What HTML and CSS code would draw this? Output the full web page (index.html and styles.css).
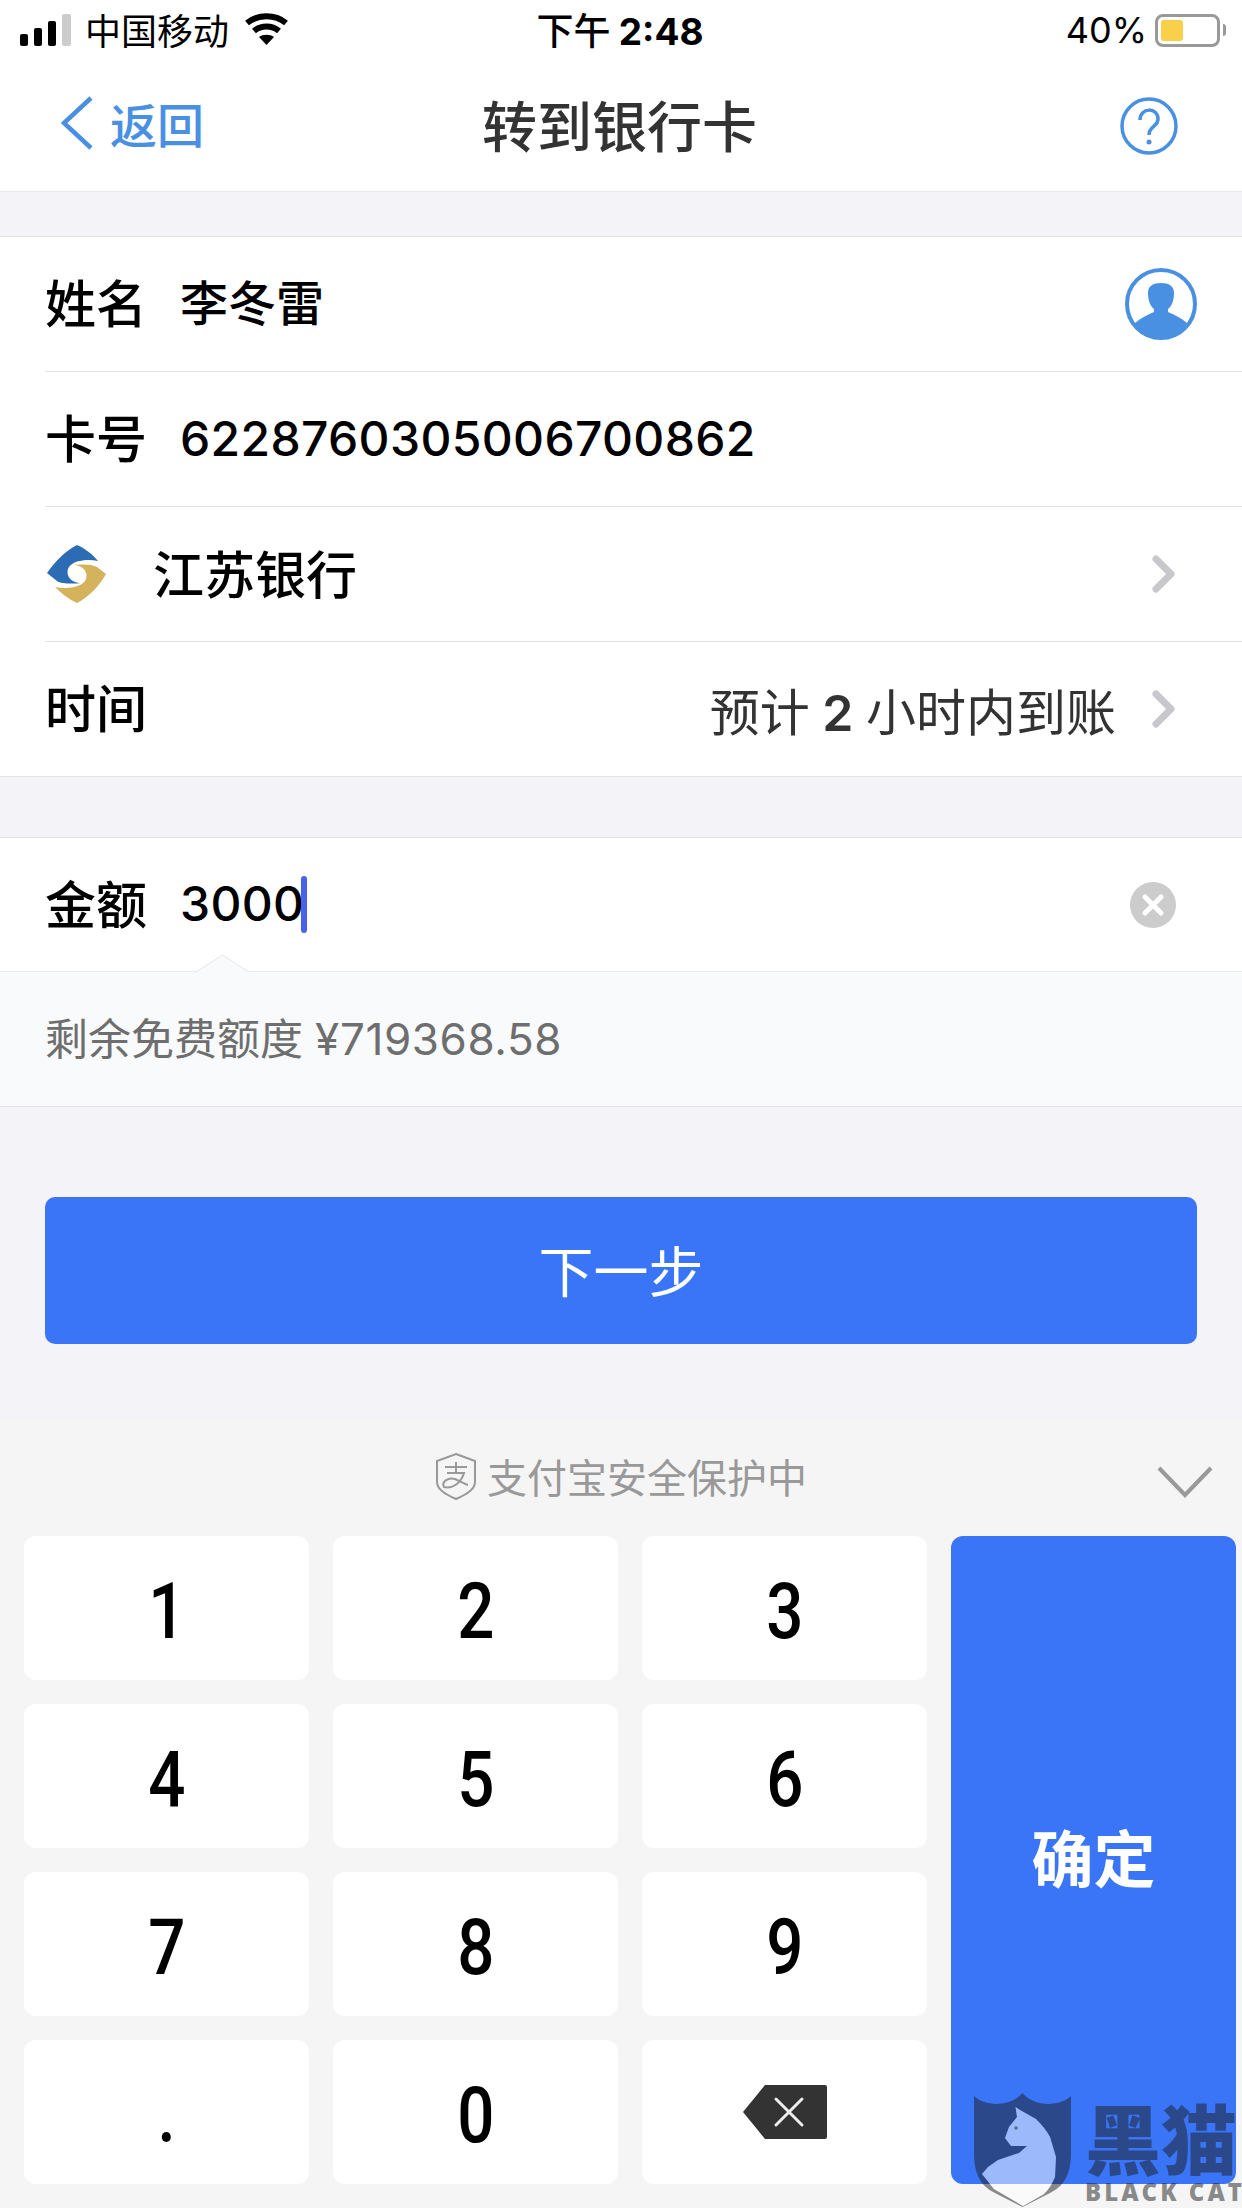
FILE: index.html
```html
<!DOCTYPE html>
<html lang="zh-CN">
<head>
  <meta charset="UTF-8">
  <meta name="viewport" content="width=device-width, initial-scale=1.0">
  <title>转到银行卡</title>
  <link rel="stylesheet" href="styles.css">
</head>
<body>
  <div class="status-bar">
    <div class="status-left">
      <svg class="signal" width="52" height="32" viewBox="0 0 52 32">
        <rect x="0" y="20" width="8" height="12" rx="2" fill="#000"/>
        <rect x="14" y="14" width="8" height="18" rx="2" fill="#000"/>
        <rect x="28" y="7" width="8" height="25" rx="2" fill="#000"/>
        <rect x="42" y="0" width="9" height="32" rx="2" fill="#ccc"/>
      </svg>
      <span class="carrier">中国移动</span>
      <svg class="wifi" width="45" height="32" viewBox="0 0 45 32">
        <path d="M3 10 C14 1 31 1 42 10" fill="none" stroke="#000" stroke-width="6"/>
        <path d="M10 18 C17 12 28 12 35 18" fill="none" stroke="#000" stroke-width="6"/>
        <path d="M15 24 C19 21 26 21 30 24 L22.5 32 Z" fill="#000"/>
      </svg>
    </div>
    <div class="status-time">下午 <b>2:48</b></div>
    <div class="status-right">
      <span class="battery-text">40%</span>
      <div class="battery"><div class="battery-fill"></div></div>
      <div class="battery-cap"></div>
    </div>
  </div>

  <div class="nav-bar">
    <div class="nav-back">
      <svg width="34" height="54" viewBox="0 0 34 54">
        <path d="M31 2 L4 27 L31 52" fill="none" stroke="#4a90e2" stroke-width="4.5"/>
      </svg>
      <span>返回</span>
    </div>
    <div class="nav-title">转到银行卡</div>
    <svg class="nav-help" width="58" height="58" viewBox="0 0 58 58">
      <circle cx="29" cy="29" r="27" fill="none" stroke="#4a90e2" stroke-width="3.5"/>
      <path d="M20 23 C20 10 38 10 38 22 C38 30 29 29 29 38" fill="none" stroke="#4a90e2" stroke-width="3.5"/>
      <circle cx="29" cy="45" r="2.5" fill="#4a90e2"/>
    </svg>
  </div>

  <div class="group first-group">
    <div class="row">
      <span class="label">姓名</span>
      <span class="value">李冬雷</span>
      <svg class="avatar" width="72" height="72" viewBox="0 0 72 72">
        <defs><clipPath id="avatarClip"><circle cx="36" cy="36" r="35"/></clipPath></defs>
        <circle cx="36" cy="36" r="34" fill="#fff" stroke="#4a90e2" stroke-width="4"/>
        <g clip-path="url(#avatarClip)">
          <path d="M23 25 C23 18 28 15 36 15 C44 15 49 18 49 25 C49 32 47 38 43 41 L43 44 C50 47 56 50 62 55 L62 72 L10 72 L10 55 C16 50 22 47 29 44 L29 41 C25 38 23 32 23 25 Z" fill="#4a90e2"/>
        </g>
      </svg>
    </div>
    <div class="row">
      <span class="label">卡号</span>
      <span class="value digits">6228760305006700862</span>
    </div>
    <div class="row">
      <svg class="bank-logo" width="60" height="58" viewBox="0 0 60 58">
        <path d="M30 0 C39 4 46 10 51 16 C41 14 27 15 22 22 C18 28 22 38 34 38 C27 39 14 39 10 36 L0 28 C7 18 18 6 30 0 Z" fill="#2b6cb4"/>
        <path d="M30 58 C21 54 14 48 8 42 C19 44 33 43 38 36 C42 30 38 20 26 20 C33 19 46 19 50 22 L59 29 C53 40 42 52 30 58 Z" fill="#d4b35c"/>
      </svg>
      <span class="bank-name">江苏银行</span>
      <svg class="chevron" width="24" height="38" viewBox="0 0 24 38">
        <path d="M4 4 L19 19 L4 34" fill="none" stroke="#c7c7cc" stroke-width="7" stroke-linecap="round" stroke-linejoin="round"/>
      </svg>
    </div>
    <div class="row last-row">
      <span class="label">时间</span>
      <span class="row-note">预计 <b>2</b> 小时内到账</span>
      <svg class="chevron" width="24" height="38" viewBox="0 0 24 38">
        <path d="M4 4 L19 19 L4 34" fill="none" stroke="#c7c7cc" stroke-width="7" stroke-linecap="round" stroke-linejoin="round"/>
      </svg>
    </div>
  </div>

  <div class="group amount-group">
    <div class="row amount-row">
      <span class="label">金额</span>
      <span class="value digits">3000</span>
      <span class="caret"></span>
      <svg class="clear" width="46" height="46" viewBox="0 0 46 46">
        <circle cx="23" cy="23" r="23" fill="#ccc"/>
        <path d="M15 15 L31 31 M31 15 L15 31" stroke="#fff" stroke-width="5" stroke-linecap="round"/>
      </svg>
    </div>
    <div class="hint">
      <svg class="hint-arrow" width="53" height="18" viewBox="0 0 53 18">
        <path d="M0 18 L26.5 1 L53 18" fill="#f9fafc" stroke="#e6e6ea" stroke-width="1"/>
      </svg>
      剩余免费额度 <span class="hint-num">¥719368.58</span>
    </div>
  </div>

  <div class="next-wrap">
    <div class="next-btn"><span>下一步</span></div>
  </div>

  <div class="keyboard">
    <div class="kb-head">
      <svg class="shield" width="42" height="48" viewBox="0 0 42 48">
        <path d="M21 2 L40 9 L40 30 C40 38 30 43 21 47 C12 43 2 38 2 30 L2 9 Z" fill="none" stroke="#999" stroke-width="2"/>
        <path d="M10 15 L32 15 M21 10 L21 21 M12 21 L29 21 C26 31 18 37 9 35 C6 30 13 25 20 27 C25 29 29 32 33 33" fill="none" stroke="#999" stroke-width="2"/>
      </svg>
      <span>支付宝安全保护中</span>
      <svg class="kb-hide" width="56" height="33" viewBox="0 0 56 33">
        <path d="M2 3 L28 30 L54 3" fill="none" stroke="#999" stroke-width="4"/>
      </svg>
    </div>
    <div class="keys">
      <div class="key"><span class="num">1</span></div>
      <div class="key"><span class="num">2</span></div>
      <div class="key"><span class="num">3</span></div>
      <div class="key confirm"><span>确定</span></div>
      <div class="key"><span class="num">4</span></div>
      <div class="key"><span class="num">5</span></div>
      <div class="key"><span class="num">6</span></div>
      <div class="key"><span class="num">7</span></div>
      <div class="key"><span class="num">8</span></div>
      <div class="key"><span class="num">9</span></div>
      <div class="key"><span class="num">.</span></div>
      <div class="key"><span class="num">0</span></div>
      <div class="key">
        <svg width="84" height="54" viewBox="0 0 84 54">
          <path d="M22 0 L82 0 Q84 0 84 2 L84 52 Q84 54 82 54 L22 54 L0 27 Z" fill="#333"/>
          <path d="M33 14 L59 40 M59 14 L33 40" stroke="#eee" stroke-width="3" stroke-linecap="round"/>
        </svg>
      </div>
    </div>
  </div>

  <div class="watermark">
    <svg width="97" height="114" viewBox="0 0 97 114">
      <path fill-rule="evenodd" d="M0 3 C10 13 36 15 48.5 0 C61 15 87 13 97 3 L97 60 C97 84 88 94 76 100 L48.5 114 L21 100 C9 94 0 84 0 60 Z M41.5 14 L46 17 L62 26 C68 32 73 38 76 44 L82 64 L81 84 C78 91 75 96 70 101 L49 113 L20 96 L8 81 L14 74 L24 67 L45 60 L53 53 L37 53 L31 45 L35 34 L43 24 Z" fill="#1e1e1e" fill-opacity="0.5"/>
      <path d="M41.5 14 L46 17 L62 26 C68 32 73 38 76 44 L82 64 L81 84 C78 91 75 96 70 101 L49 113 L20 96 L8 81 L14 74 L24 67 L45 60 L53 53 L37 53 L31 45 L35 34 L43 24 Z" fill="#fff" fill-opacity="0.5"/>
      <circle cx="42" cy="35" r="1.8" fill="#1e1e1e" fill-opacity="0.5"/>
    </svg>
    <div class="wm-text">
      <div class="wm-cn">黑猫</div>
      <div class="wm-en">BLACK CAT</div>
    </div>
  </div>
</body>
</html>
```

FILE: styles.css
```css
/* General Styles */
html, body {
  margin: 0;
  width: 1242px;
  height: 2208px;
  overflow: hidden;
}

body {
  position: relative;
  display: flex;
  flex-direction: column;
  font-family: "Noto Sans CJK SC", "Noto Sans", sans-serif;
  background: #f3f3f8;
  color: #000;
}

/* Status bar */
.status-bar {
  height: 60px;
  flex: none;
  background: #fff;
  display: grid;
  grid-template-columns: 1fr auto 1fr;
  align-items: center;
  padding: 0 16px 0 20px;
  font-size: 36px;
}

.status-left {
  display: flex;
  align-items: center;
}

.carrier {
  margin-left: 13px;
  margin-bottom: 3px;
}

.wifi {
  margin-left: 15px;
  margin-bottom: 2px;
}

.status-time {
  font-size: 37px;
  font-weight: 500;
  margin-right: 6px;
  margin-bottom: 3px;
}

.status-time b {
  font-family: "Inter", sans-serif;
  font-weight: 700;
}

.status-right {
  display: flex;
  align-items: center;
  justify-content: flex-end;
}

.battery-text {
  font-family: "Inter", sans-serif;
  font-size: 36px;
  margin-right: 8px;
}

.battery {
  width: 65px;
  height: 33px;
  box-sizing: border-box;
  border: 3px solid #999;
  border-radius: 8px;
  padding: 3px;
}

.battery-fill {
  width: 22px;
  height: 100%;
  background: #fad04a;
  border-radius: 3px;
}

.battery-cap {
  width: 3px;
  height: 12px;
  margin-left: 3px;
  background: #999;
  border-radius: 0 3px 3px 0;
}

/* Nav bar */
.nav-bar {
  height: 132px;
  flex: none;
  box-sizing: border-box;
  background: #fff;
  border-bottom: 1px solid #e9e9ee;
  position: relative;
  display: flex;
  align-items: center;
  justify-content: space-between;
  padding: 0 64px 6px 60px;
}

.nav-back {
  display: flex;
  align-items: center;
  gap: 16px;
  color: #4a90e2;
  font-size: 47px;
  font-weight: 500;
}

.nav-title {
  position: absolute;
  left: 0;
  right: 3px;
  top: 30px;
  text-align: center;
  font-size: 55px;
  line-height: 66px;
  font-weight: 500;
  color: #333;
  pointer-events: none;
}

.nav-help {
  margin-top: 6px;
}

/* Form groups */
.group {
  background: #fff;
  border-top: 1px solid #e3e3e6;
  border-bottom: 1px solid #e3e3e6;
}

.first-group {
  margin-top: 44px;
}

.amount-group {
  margin-top: 60px;
}

.row {
  height: 135px;
  box-sizing: border-box;
  margin-left: 45px;
  padding-right: 45px;
  border-bottom: 1px solid #e3e3e6;
  display: flex;
  align-items: center;
}

.last-row {
  height: 134px;
  border-bottom: none;
}

.label {
  font-size: 51px;
  font-weight: 500;
  width: 135px;
  flex: none;
  margin-bottom: 6px;
}

.value {
  font-size: 48px;
  font-weight: 500;
  margin-bottom: 8px;
}

.digits {
  font-family: "Inter", sans-serif;
  letter-spacing: 0.35px;
  margin-bottom: 2px;
}

.avatar {
  margin-left: auto;
}

.bank-logo {
  margin-left: 2px;
}

.bank-name {
  font-size: 51px;
  font-weight: 500;
  margin-left: 46px;
  margin-bottom: 5px;
}

.chevron {
  margin-left: auto;
  margin-right: 21px;
}

.row-note {
  margin-left: auto;
  font-family: "Inter", "Noto Sans CJK SC", sans-serif;
  font-size: 50px;
  word-spacing: -1.5px;
  color: #333;
}

.row-note b {
  font-weight: 600;
}

.row-note + .chevron {
  margin-left: 36px;
}

.amount-row {
  height: 133px;
  border-bottom: none;
}

.caret {
  width: 6px;
  height: 57px;
  margin-left: -3px;
  border-radius: 3px;
  background: #4a62e8;
}

.clear {
  margin-left: auto;
  margin-right: 21px;
}

.hint {
  height: 135px;
  box-sizing: border-box;
  border-top: 1px solid #ececef;
  background: #f9fafc;
  color: #6e6e6e;
  font-family: "Inter", "Noto Sans CJK SC", sans-serif;
  font-size: 43px;
  line-height: 134px;
  padding-left: 45px;
  position: relative;
}

.hint-num {
  font-size: 44px;
  letter-spacing: 0.6px;
}

/* notch above the hint, sits on the top border */
.hint-arrow {
  position: absolute;
  top: -18px;
  left: 196px;
}

/* Next button */
.next-wrap {
  padding: 90px 45px 0;
}

.next-btn {
  height: 147px;
  border-radius: 10px;
  background: #3975f6;
  color: #fff;
  font-size: 55px;
  display: flex;
  align-items: center;
  justify-content: center;
}

.next-btn span {
  margin-bottom: 6px;
}

/* Keyboard */
.keyboard {
  flex: 1;
  margin-top: 76px;
  background: #f5f5f5;
  display: flex;
  flex-direction: column;
}

.kb-head {
  height: 116px;
  flex: none;
  box-sizing: border-box;
  padding-bottom: 4px;
  position: relative;
  display: flex;
  align-items: center;
  justify-content: center;
  gap: 10px;
  color: #999;
  font-size: 40px;
}

.kb-hide {
  position: absolute;
  right: 29px;
  top: 45px;
}

.keys {
  display: grid;
  grid-template-columns: repeat(4, 285px);
  grid-template-rows: repeat(4, 144px);
  gap: 24px;
  padding-left: 24px;
}

.key {
  background: #fff;
  border-radius: 12px;
  display: flex;
  align-items: center;
  justify-content: center;
}

/* no DIN here, so squeeze Roboto a bit */
.num {
  display: inline-block;
  margin-top: 8px;
  font-family: "Roboto", sans-serif;
  font-size: 77px;
  font-weight: 500;
  transform: scaleX(0.85);
}

.confirm {
  grid-column: 4;
  grid-row: 1 / span 4;
  background: #3975f6;
  color: #fff;
  font-size: 62px;
  font-weight: 700;
}

.confirm span {
  margin-bottom: 8px;
}

/* Watermark over the corner */
.watermark {
  position: absolute;
  left: 974px;
  top: 2093px;
  display: flex;
  gap: 14px;
}

.wm-text {
  width: 152px;
}

.wm-cn {
  font-size: 76px;
  line-height: 76px;
  margin-top: 5px;
  font-weight: 900;
  color: rgba(30, 30, 30, 0.5);
  white-space: nowrap;
}

.wm-en {
  font-family: "Open Sans", sans-serif;
  font-size: 24px;
  font-weight: 800;
  line-height: 20px;
  letter-spacing: 3px;
  margin-top: 8px;
  color: rgba(30, 30, 30, 0.5);
  white-space: nowrap;
}
```
